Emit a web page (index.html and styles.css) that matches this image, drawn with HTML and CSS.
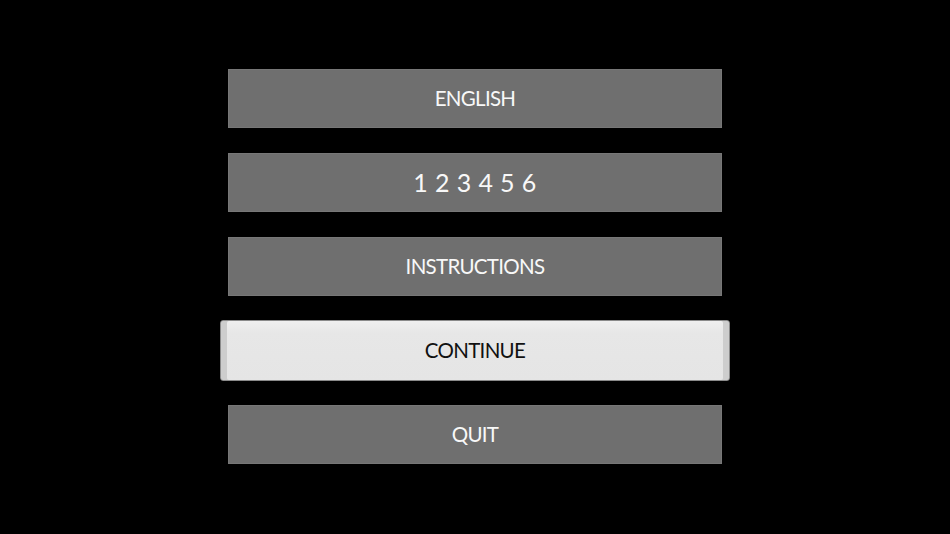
FILE: index.html
```html
<!DOCTYPE html>
<html>
<head>
<meta charset="utf-8">
<link rel="stylesheet" href="styles.css">
</head>
<body>
<div class="menu">
  <div class="btn"><span class="label">ENGLISH</span></div>
  <div class="btn"><span class="label digits">1 2 3 4 5 6</span></div>
  <div class="btn"><span class="label">INSTRUCTIONS</span></div>
  <div class="btn selected"><span class="label">CONTINUE</span></div>
  <div class="btn"><span class="label">QUIT</span></div>
</div>
</body>
</html>
```
FILE: styles.css
```css
html, body {
  margin: 0;
  padding: 0;
  background: #000;
  width: 950px;
  height: 534px;
  overflow: hidden;
}
.menu {
  display: flex;
  flex-direction: column;
  align-items: center;
  gap: 25px;
  padding-top: 69px;
}
.btn {
  width: 494px;
  height: 59px;
  box-sizing: border-box;
  background: #6f6f6f;
  border: 1px solid #777;
  display: flex;
  align-items: center;
  justify-content: center;
  font-family: "Lato", "Liberation Sans", sans-serif;
  font-size: 20.5px;
  color: #f8f8f8;
  letter-spacing: -0.7px;
}
.label {
  line-height: 1;
  margin-bottom: 1px;
}
.digits {
  font-size: 25px;
  letter-spacing: 0.4px;
}
.selected {
  width: 510px;
  height: 61px;
  margin: -1px 0;
  border: 1px solid #8a8a8a;
  border-radius: 3px;
  background: linear-gradient(#efefef, #e7e7e7 20%, #e5e5e5);
  box-shadow: inset 6px 0 0 #cdcdcd, inset -6px 0 0 #cdcdcd;
  color: #111;
}
```
